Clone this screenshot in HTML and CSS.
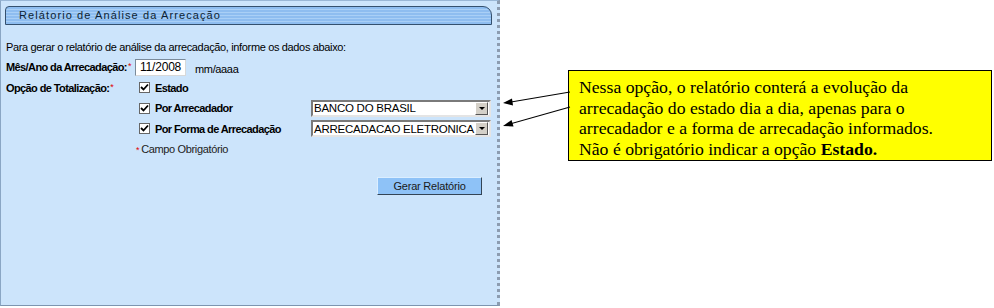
FILE: index.html
```html
<!DOCTYPE html>
<html lang="pt-BR">
<head>
    <meta charset="UTF-8">
    <title>Relatório de Análise da Arrecadação</title>
    <link rel="stylesheet" href="styles.css">
</head>
<body>
    <div class="page">
        <div class="panel">
            <div class="tab">Relátorio de Análise da Arrecação</div>

            <p class="intro">Para gerar o relatório de análise da arrecadação, informe os dados abaixo:</p>

            <div class="form">
                <div class="label">Mês/Ano da Arrecadação:<span class="req">*</span></div>
                <div class="cell wide">
                    <span class="input">11/2008</span>
                    <span class="hint">mm/aaaa</span>
                </div>

                <div class="label">Opção de Totalização:<span class="req">*</span></div>
                <div class="cell wide">
                    <span class="check"><svg width="9" height="9" viewBox="0 0 9 9"><path d="M1 4 L3.5 6.5 L8 1.5" fill="none" stroke="#000" stroke-width="1.8"/></svg></span>
                    <span class="opt">Estado</span>
                </div>

                <div class="label"></div>
                <div class="cell">
                    <span class="check"><svg width="9" height="9" viewBox="0 0 9 9"><path d="M1 4 L3.5 6.5 L8 1.5" fill="none" stroke="#000" stroke-width="1.8"/></svg></span>
                    <span class="opt">Por Arrecadador</span>
                </div>
                <div class="cell">
                    <div class="select"><span class="value">BANCO DO BRASIL</span><span class="drop"></span></div>
                </div>

                <div class="label"></div>
                <div class="cell">
                    <span class="check"><svg width="9" height="9" viewBox="0 0 9 9"><path d="M1 4 L3.5 6.5 L8 1.5" fill="none" stroke="#000" stroke-width="1.8"/></svg></span>
                    <span class="opt">Por Forma de Arrecadação</span>
                </div>
                <div class="cell">
                    <div class="select"><span class="value">ARRECADACAO ELETRONICA</span><span class="drop"></span></div>
                </div>

                <div class="label"></div>
                <div class="cell wide note-req"><span class="req">*</span> Campo Obrigatório</div>
            </div>

            <div class="actions">
                <button class="btn">Gerar Relatório</button>
            </div>
        </div>

        <div class="annotation">
            <svg class="arrows" width="72" height="140" viewBox="0 0 72 140">
                <line x1="70" y1="92" x2="8" y2="102.5" stroke="#000" stroke-width="1.2"/>
                <line x1="70" y1="107" x2="8" y2="124.5" stroke="#000" stroke-width="1.2"/>
                <path d="M3 103 L12 98.5 L13 105.5 Z" fill="#000"/>
                <path d="M3 126 L11.5 120 L13.5 126.5 Z" fill="#000"/>
            </svg>
            <div class="callout">
                Nessa opção, o relatório conterá a evolução da<br>
                arrecadação do estado dia a dia, apenas para o<br>
                arrecadador e a forma de arrecadação informados.<br>
                Não é obrigatório indicar a opção <b>Estado.</b>
            </div>
        </div>
    </div>
</body>
</html>
```

FILE: styles.css
```css
/* Relatório de análise */
body {
    margin: 0;
    background-color: #fff;
    font-family: "Liberation Sans", Arial, sans-serif;
    font-size: 11px;
    letter-spacing: -0.35px;
    color: #000;
}

.page {
    display: flex;
    align-items: flex-start;
}

.panel {
    width: 500px;
    height: 306px;
    box-sizing: border-box;
    padding: 5px 5px 0 4px;
    background-color: #cce4fb;
    border-top: 1px solid #9ab7d6;
    border-left: 1px solid #8aa6c4;
    border-bottom: 1px solid #7d95b0;
    border-right: 3px dotted #8c9cb0;
}

.tab {
    height: 17px;
    line-height: 17px;
    padding-left: 13px;
    border: 1px solid #34506e;
    border-radius: 4px 9px 0 0;
    background: repeating-linear-gradient(to bottom, #8ebdf0 0, #8ebdf0 2px, #a9cff6 2px, #a9cff6 3px);
    color: #0d1f33;
    font-size: 11px;
    letter-spacing: 1.1px;
}

.intro {
    margin: 15px 0 0 1px;
    line-height: 14px;
}

.form {
    display: grid;
    grid-template-columns: 129px 176px 180px;
    grid-auto-rows: 20.5px;
    margin-top: 3px;
    margin-left: 1px;
}

.label {
    display: flex;
    align-items: center;
    font-weight: bold;
    letter-spacing: -0.6px;
    white-space: nowrap;
}

.cell {
    display: flex;
    align-items: center;
    white-space: nowrap;
}

.wide {
    grid-column: 2 / 4;
}

.req {
    color: #e00000;
    font-size: 9px;
    font-weight: normal;
    align-self: flex-start;
    margin-top: 4px;
    margin-left: 1px;
}

.input {
    width: 45px;
    height: 15px;
    line-height: 15px;
    padding-left: 4px;
    background-color: #fff;
    border: 1px solid #7a8a9a;
    border-right-color: #d8d8d8;
    border-bottom-color: #d8d8d8;
    font-size: 12px;
    letter-spacing: -0.2px;
}

.hint {
    margin-left: 9px;
    margin-top: 3px;
}

.check {
    width: 9px;
    height: 9px;
    margin-left: 4px;
    background-color: #fff;
    border: 1px solid #666;
    display: flex;
    align-items: center;
    justify-content: center;
}

.opt {
    margin-left: 5px;
    font-weight: bold;
    letter-spacing: -0.6px;
}

.select {
    display: flex;
    align-items: center;
    width: 180px;
    height: 17px;
    box-sizing: border-box;
    background-color: #fff;
    border: 2px solid #7a7a7a;
    border-right-color: #e4e4e4;
    border-bottom-color: #e4e4e4;
}

.value {
    flex: 1;
    padding-left: 1px;
    font-size: 11.5px;
    letter-spacing: -0.25px;
    white-space: nowrap;
    overflow: hidden;
}

.drop {
    width: 13px;
    height: 13px;
    margin-right: 1px;
    box-sizing: border-box;
    background-color: #d4d0c8;
    border: 1px solid #fff;
    border-right-color: #555;
    border-bottom-color: #555;
    position: relative;
}

.drop::after {
    content: "";
    position: absolute;
    left: 3px;
    top: 4px;
    border-left: 3px solid transparent;
    border-right: 3px solid transparent;
    border-top: 3px solid #000;
}

.note-req {
    padding-left: 1px;
    color: #222;
}

.note-req .req {
    margin-top: 6px;
    margin-left: 0;
    margin-right: 2px;
}

.actions {
    display: flex;
    justify-content: flex-end;
    margin-top: 17px;
    padding-right: 10px;
}

.btn {
    width: 105px;
    height: 18px;
    padding: 0;
    background-color: #8ec2f7;
    border: 1px solid #345;
    border-top-color: #dbeeff;
    border-left-color: #dbeeff;
    font-family: "Liberation Sans", Arial, sans-serif;
    font-size: 11px;
    letter-spacing: -0.2px;
    color: #1a1a1a;
}

.annotation {
    position: relative;
    flex: 1;
    padding: 70px 0 0 68px;
}

.arrows {
    position: absolute;
    left: 0;
    top: 0;
}

.callout {
    width: 424px;
    height: 91px;
    box-sizing: border-box;
    padding: 6px 0 0 10px;
    background-color: #ffff00;
    border: 1px solid #000;
    font-family: "Liberation Serif", "Times New Roman", serif;
    font-size: 17.7px;
    line-height: 20.5px;
    letter-spacing: 0;
}
```
